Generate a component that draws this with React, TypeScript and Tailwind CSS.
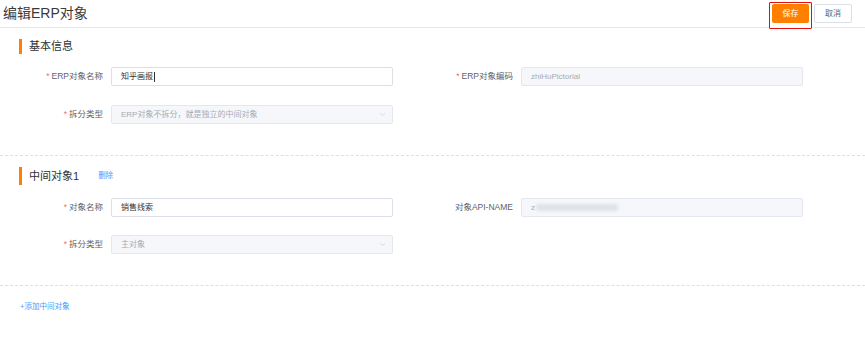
import { ChevronDown } from "lucide-react";

const font = { fontFamily: '"Liberation Sans", "Noto Sans CJK SC", sans-serif' };

function Label({ text, required }: { text: string; required?: boolean }) {
  return (
    <div className="w-[103px] shrink-0 text-right text-[8.5px] text-[#606266] leading-none">
      {required && <span className="text-[#f56c6c] mr-[2px]">*</span>}
      {text}
    </div>
  );
}

function Field({
  label,
  required,
  children,
  disabled,
  select,
}: {
  label: string;
  required?: boolean;
  children: React.ReactNode;
  disabled?: boolean;
  select?: boolean;
}) {
  return (
    <div className="flex items-center gap-[8px]">
      <Label text={label} required={required} />
      <div
        className={`w-[282px] h-[19px] rounded-[2px] border flex items-center pl-[9px] pr-[5px] text-[8px] leading-none ${
          disabled ? "bg-[#f5f7fa] border-[#e4e7ed]" : "bg-white border-[#dcdfe6]"
        }`}
      >
        <div className="flex-1 flex items-center">{children}</div>
        {select && <ChevronDown className="w-[9px] h-[9px] text-[#c0c4cc]" strokeWidth={1.5} />}
      </div>
    </div>
  );
}

function SectionTitle({ title, barH, action }: { title: string; barH: string; action?: string }) {
  return (
    <div className="flex items-center pl-[19px]">
      <div className={`w-[3px] ${barH} bg-[#ff8000]`} />
      <span className="ml-[7px] text-[11px] text-[#303133] leading-none">{title}</span>
      {action && <span className="ml-[19px] text-[7.5px] text-[#409eff] leading-none">{action}</span>}
    </div>
  );
}

export default function App() {
  return (
    <div className="w-[865px] h-[356px] bg-white overflow-hidden" style={font}>
      <header className="h-[28px] border-b border-[#e8e8e8] flex items-start justify-between pl-[3px]">
        <h1 className="mt-[6px] text-[14px] text-[#3a3a3a] leading-none">编辑ERP对象</h1>
        <div className="flex items-start pr-[13px] pt-[2px]">
          <div className="relative z-10 bg-white pt-[1px] pb-[5px] px-[2px] border-[1.5px] border-[#e01010] rounded-[1px]">
            <button className="block w-[37px] h-[19px] bg-[#ff8000] rounded-[2px] text-white text-[8px] leading-none">
              保存
            </button>
          </div>
          <button className="mt-[2px] ml-[2px] w-[38px] h-[19px] bg-white border border-[#dcdfe6] rounded-[2px] text-[#606266] text-[8px] leading-none">
            取消
          </button>
        </div>
      </header>

      <section className="pt-[11px]">
        <SectionTitle title="基本信息" barH="h-[15px]" />
        <div className="mt-[13px] flex gap-[17px]">
          <div className="flex flex-col gap-[19px]">
            <Field label="ERP对象名称" required>
              <span className="text-[#303133]">知乎画报</span>
              <span className="ml-[1px] w-[1px] h-[10px] bg-[#303133]" />
            </Field>
            <Field label="拆分类型" required disabled select>
              <span className="text-[#a8abb2]">ERP对象不拆分，就是独立的中间对象</span>
            </Field>
          </div>
          <div>
            <Field label="ERP对象编码" required disabled>
              <span className="text-[#a8abb2]">zhiHuPictorial</span>
            </Field>
          </div>
        </div>
      </section>

      <div className="mt-[31px] border-t border-dashed border-[#dcdfe6]" />

      <section className="pt-[11px]">
        <SectionTitle title="中间对象1" barH="h-[18px]" action="删除" />
        <div className="mt-[13px] flex gap-[17px]">
          <div className="flex flex-col gap-[18px]">
            <Field label="对象名称" required>
              <span className="text-[#303133]">销售线索</span>
            </Field>
            <Field label="拆分类型" required disabled select>
              <span className="text-[#a8abb2]">主对象</span>
            </Field>
          </div>
          <div>
            <Field label="对象API-NAME" disabled>
              <span className="text-[#a8abb2]">z</span>
              <span className="ml-[1px] w-[82px] h-[7px] rounded-full bg-[#dfe2e7] blur-[1.5px]" />
            </Field>
          </div>
        </div>
      </section>

      <div className="mt-[31px] border-t border-dashed border-[#dcdfe6]" />

      <div className="pl-[20px] mt-[17px] text-[7.5px] text-[#409eff] leading-none">+添加中间对象</div>
    </div>
  );
}
